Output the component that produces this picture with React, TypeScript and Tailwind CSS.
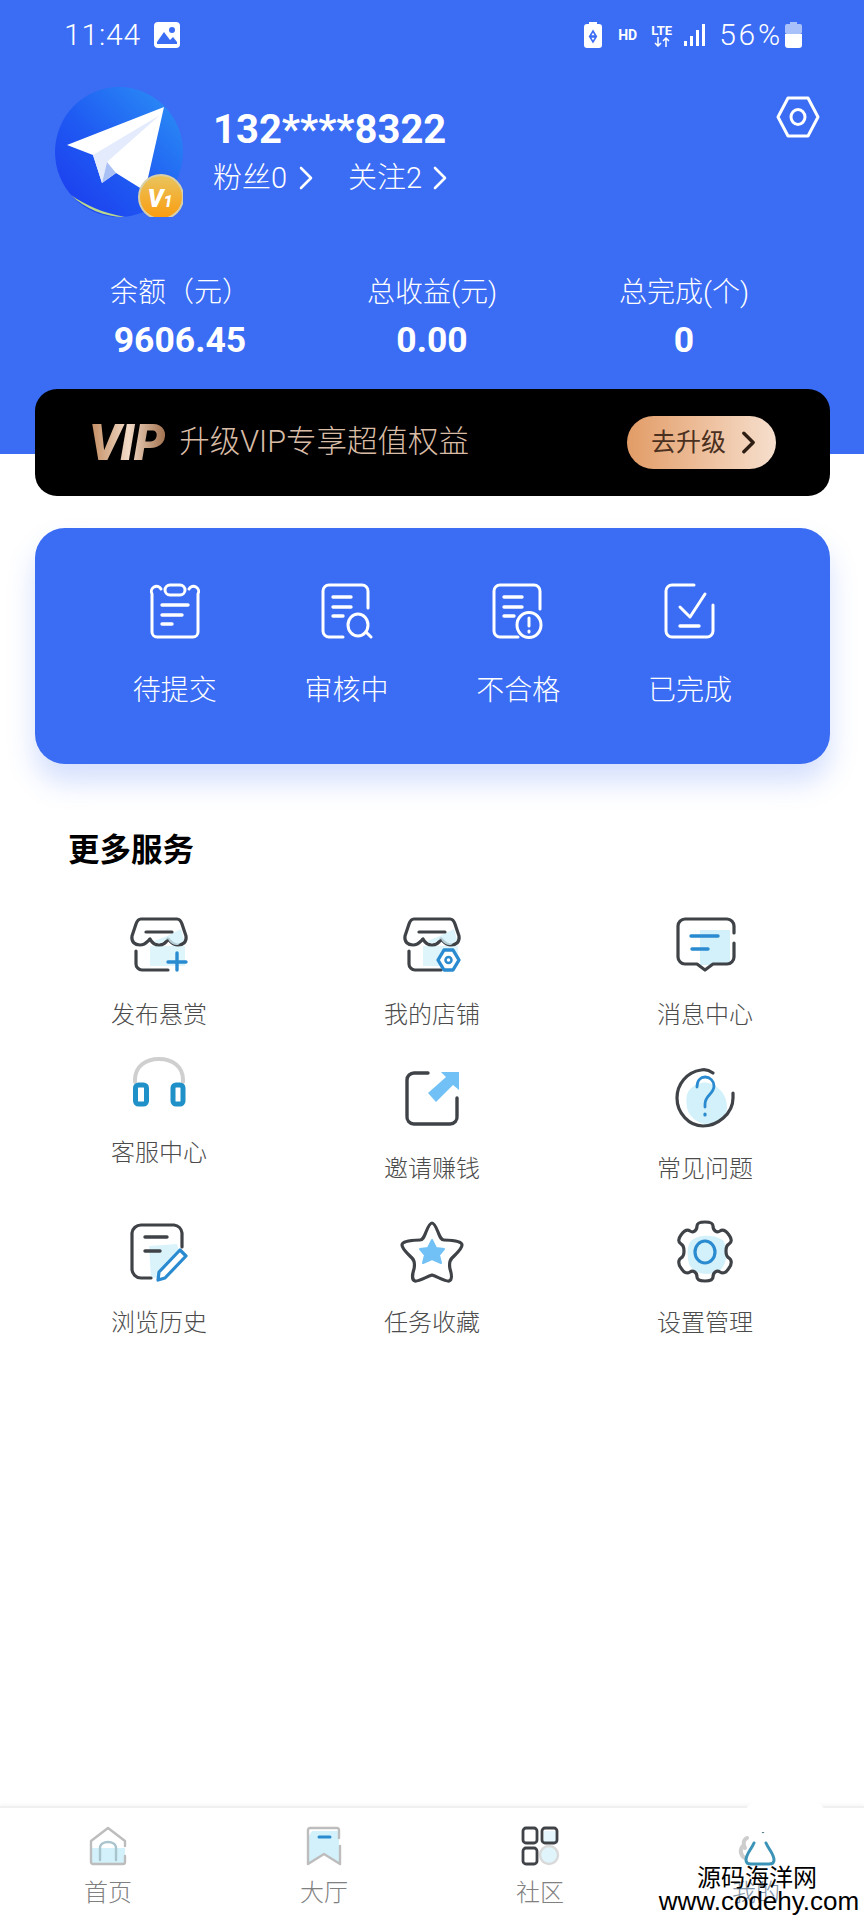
import React from "react";

const INK = "#3f4347";
const BLUE = "#2a8bd0";
const PALE = "#d3f1fa";
const SKY = "#72c1f6";

type SvgProps = { children: React.ReactNode; size?: number; box?: string; className?: string };

function Svg({ children, size = 64, box = "0 0 64 64", className }: SvgProps) {
  return (
    <svg width={size} height={size} viewBox={box} fill="none" strokeLinecap="round" strokeLinejoin="round" className={className}>
      {children}
    </svg>
  );
}

function Avatar() {
  return (
    <svg width="128" height="130" viewBox="0 0 128 130" className="shrink-0">
      <defs>
        <linearGradient id="avatarDisc" x1="1" y1="0" x2="0" y2="1">
          <stop offset="0" stopColor="#2c94f6" />
          <stop offset="0.55" stopColor="#1f5af2" />
          <stop offset="1" stopColor="#1c38ee" />
        </linearGradient>
        <linearGradient id="coin" x1="0" y1="0" x2="0" y2="1">
          <stop offset="0" stopColor="#e9c55f" />
          <stop offset="1" stopColor="#fb9b0c" />
        </linearGradient>
      </defs>
      <ellipse cx="64" cy="65" rx="64" ry="65" fill="url(#avatarDisc)" />
      <path d="M16 108 C30 122 50 130 70 130 C48 126 30 118 16 108Z" fill="#b8d78d" />
      <path d="M109 20 L12 58 L38 68 L47 96 L61 86 L90 104Z" fill="#ffffff" />
      <path d="M105 28 L38 68 L47 96 L52 75Z" fill="#e4ebfc" />
      <path d="M52 75 L47 96 L61 86Z" fill="#a9c0f5" />
      <circle cx="106" cy="110" r="22" fill="url(#coin)" stroke="#d8cfa8" strokeWidth="2" />
      <text x="105" y="120" textAnchor="middle" fontFamily="Roboto, sans-serif" fontWeight="900" fontStyle="italic" fontSize="25" fill="#fff">V<tspan fontSize="16">1</tspan></text>
    </svg>
  );
}

function Chevron({ color = "#fff", w = 14, h = 24, stroke = 2.6 }: { color?: string; w?: number; h?: number; stroke?: number }) {
  return (
    <svg width={w} height={h} viewBox="0 0 14 24" fill="none">
      <path d="M2 2 L12 12 L2 22" stroke={color} strokeWidth={stroke} strokeLinecap="round" strokeLinejoin="round" />
    </svg>
  );
}

function StatusBar() {
  return (
    <div className="flex h-[70px] items-center pl-[64px] pr-[62px] text-white">
      <span className="text-[30px] font-light leading-none tracking-[0.8px]">11:44</span>
      <svg width="26" height="26" viewBox="0 0 26 26" className="ml-[13px]">
        <rect width="26" height="26" rx="4" fill="#fff" />
        <circle cx="18" cy="8" r="3" fill="#3a6cf4" />
        <path d="M3 20 L10 10 L16 18 L19 15 L23 20 V22 H3Z" fill="#3a6cf4" />
      </svg>
      <div className="flex-1" />
      <svg width="18" height="26" viewBox="0 0 18 26">
        <rect x="5" y="0" width="8" height="3" fill="#fff" />
        <rect y="2" width="18" height="24" rx="3" fill="#fff" />
        <path d="M9 9 L12 14 H6Z M6 15 L12 15 L9 20Z" fill="none" stroke="#3a6cf4" strokeWidth="1.6" />
      </svg>
      <span className="ml-[16px] text-[14px] font-bold leading-none">HD</span>
      <div className="ml-[13px] flex w-[23px] flex-col items-center leading-none">
        <span className="text-[13px] font-bold leading-[13px]">LTE</span>
        <svg width="20" height="10" viewBox="0 0 20 10">
          <path d="M6 0 V9 M3 6 L6 9 L9 6 M14 10 V1 M11 4 L14 1 L17 4" stroke="#fff" strokeWidth="1.5" fill="none" />
        </svg>
      </div>
      <svg width="21" height="22" viewBox="0 0 21 22" className="ml-[11px]">
        <rect x="0" y="17" width="3" height="5" fill="#fff" />
        <rect x="6" y="12" width="3" height="10" fill="#fff" />
        <rect x="12" y="6" width="3" height="16" fill="#fff" />
        <rect x="18" y="0" width="3" height="22" fill="#fff" />
      </svg>
      <span className="ml-[14px] text-[30px] font-light leading-none tracking-[2.8px]">56%</span>
      <svg width="17" height="26" viewBox="0 0 17 26" className="ml-[2px]">
        <rect x="5" y="0" width="7" height="3" fill="#a9c1fa" />
        <rect y="2" width="17" height="10" rx="2" fill="#a9c1fa" />
        <path d="M0 12 H17 V23 A3 3 0 0 1 14 26 H3 A3 3 0 0 1 0 23Z" fill="#fff" />
      </svg>
    </div>
  );
}

function Profile() {
  return (
    <div className="mt-[17px] flex items-start pl-[55px] pr-[44px] text-white">
      <Avatar />
      <div className="ml-[30px] flex flex-col">
        <span className="mt-[19px] text-[40px] font-bold leading-[48px]">132****8322</span>
        <div className="mt-[4px] flex items-center text-[29px] font-light leading-[40px]">
          <span>粉丝0</span>
          <span className="ml-[12px]"><Chevron /></span>
          <span className="ml-[35px]">关注2</span>
          <span className="ml-[11px]"><Chevron /></span>
        </div>
      </div>
      <div className="flex-1" />
      <svg width="44" height="42" viewBox="0 0 44 42" fill="none" className="mt-[9px]">
        <path d="M12 2 H32 L42 21 L32 40 H12 L2 21Z" stroke="#fff" strokeWidth="3" strokeLinejoin="round" />
        <ellipse cx="22" cy="21" rx="7" ry="7.5" stroke="#fff" strokeWidth="3" />
      </svg>
    </div>
  );
}

function Stat({ label, value }: { label: string; value: string }) {
  return (
    <div className="flex flex-col items-center text-white">
      <span className="text-[28px] font-light leading-[40px]">{label}</span>
      <span className="mt-[5px] text-[35.5px] font-bold leading-[44px]">{value}</span>
    </div>
  );
}

function VipBanner() {
  return (
    <div className="relative ml-[35px] mr-[34px] -mt-[65px] flex h-[107px] items-center rounded-[22px] bg-black pl-[54px] pr-[54px]">
      <span className="bg-gradient-to-r from-[#c08a5f] via-[#f2dac6] to-[#9c6b47] bg-clip-text pr-[4px] text-[50px] font-black italic leading-none tracking-[-1px] text-transparent">VIP</span>
      <span className="ml-[11px] text-[30.5px] font-light leading-none text-[#d9bca6]">升级VIP专享超值权益</span>
      <div className="flex-1" />
      <div className="flex h-[53px] w-[149px] items-center rounded-full bg-gradient-to-r from-[#e29c66] to-[#f6dfcd] pl-[24px]">
        <span className="text-[25px] leading-none text-[#4a3020]">去升级</span>
        <span className="ml-[16px]"><Chevron color="#2e1d12" w={13} h={23} stroke={3.6} /></span>
      </div>
    </div>
  );
}

function WhiteIcon({ children }: { children: React.ReactNode }) {
  return (
    <svg width="56" height="56" viewBox="0 0 56 56" fill="none" stroke="#fff" strokeWidth="3" strokeLinecap="round" strokeLinejoin="round">
      {children}
    </svg>
  );
}

const taskIcons: Record<string, React.ReactNode> = {
  pending: (
    <WhiteIcon>
      <path d="M14 6 A5 5 0 0 0 5 11 V49 A5 5 0 0 0 10 54 H46 A5 5 0 0 0 51 49 V11 A5 5 0 0 0 42 6" />
      <rect x="18" y="2" width="20" height="10" rx="5" />
      <path d="M15 22 H41 M15 32 H35 M15 41 H25" strokeWidth="3.4" />
    </WhiteIcon>
  ),
  review: (
    <WhiteIcon>
      <path d="M49 25 V8 A6 6 0 0 0 43 2 H10 A6 6 0 0 0 4 8 V48 A6 6 0 0 0 10 54 H24" />
      <path d="M14 14 H32 M14 24 H32 M14 33 H24" strokeWidth="3.4" />
      <ellipse cx="39" cy="42" rx="10" ry="11" />
      <path d="M47 49 L52 54" />
    </WhiteIcon>
  ),
  failed: (
    <WhiteIcon>
      <path d="M50 26 V8 A6 6 0 0 0 44 2 H10 A6 6 0 0 0 4 8 V48 A6 6 0 0 0 10 54 H28" />
      <path d="M14 14 H32 M14 24 H32 M14 33 H24" strokeWidth="3.4" />
      <ellipse cx="39" cy="42" rx="12" ry="12.5" />
      <path d="M39 35 V43" />
      <path d="M39 48 V49" />
    </WhiteIcon>
  ),
  done: (
    <WhiteIcon>
      <path d="M32 2 H10 A6 6 0 0 0 4 8 V48 A6 6 0 0 0 10 54 H45 A6 6 0 0 0 51 48 V22" />
      <path d="M18 24 L28 34 L43 11" />
      <path d="M18 43 H37" strokeWidth="3.4" />
    </WhiteIcon>
  ),
};

const tasks = [
  { key: "pending", label: "待提交" },
  { key: "review", label: "审核中" },
  { key: "failed", label: "不合格" },
  { key: "done", label: "已完成" },
];

function TaskCard() {
  return (
    <div className="ml-[35px] mr-[34px] mt-[32px] grid h-[236px] grid-cols-4 rounded-[30px] bg-[#3a6cf4] px-[54px] pt-[55px] shadow-[0_18px_28px_rgba(58,108,244,0.22)]">
      {tasks.map((t) => (
        <div key={t.key} className="flex flex-col items-center">
          {taskIcons[t.key]}
          <span className="mt-[32px] text-[28px] font-light leading-[40px] text-white">{t.label}</span>
        </div>
      ))}
    </div>
  );
}

const Awning = () => (
  <>
    <path d="M23 34 H58 V54 H23Z" fill={PALE} opacity="0.75" />
    <path d="M14 7 H50 C53 7 54 9 55 12 L59 24 C60 30 56 33 51 33 C46 33 44 30 41 27 C39 31 36 33 32 33 C28 33 25 31 23 27 C20 30 18 33 13 33 C8 33 4 30 5 24 L9 12 C10 9 11 7 14 7Z" stroke={INK} strokeWidth="3.2" fill="none" />
    <path d="M27 29 C28 32 36 32 37 29 L41 27 C43 31 46 33 51 33 L57 28 L54 17 L40 24Z" fill={PALE} opacity="0.8" />
    <path d="M19 20 H45" stroke={INK} strokeWidth="3.2" />
    <path d="M9 39 V52 A6 6 0 0 0 15 58 H41" stroke={INK} strokeWidth="3.2" />
  </>
);

const serviceIcons: Record<string, React.ReactNode> = {
  publish: (
    <Svg>
      <Awning />
      <path d="M50 41 V58 M41 50 H59" stroke={BLUE} strokeWidth="3.4" />
    </Svg>
  ),
  shop: (
    <Svg>
      <Awning />
      <path d="M44 38 H53 L59 48 L53 58 H44 L38 48Z" fill="#fff" stroke={BLUE} strokeWidth="3.4" />
      <circle cx="48.5" cy="48" r="3" stroke={BLUE} strokeWidth="2.5" />
    </Svg>
  ),
  message: (
    <Svg>
      <path d="M27 18 H57 V53 H27Z" fill={PALE} />
      <path d="M61 21 V14 A7 7 0 0 0 54 7 H12 A7 7 0 0 0 5 14 V45 A7 7 0 0 0 12 52 H24 L32 58 L40 52 H54 A7 7 0 0 0 61 45 V31" stroke={INK} strokeWidth="3.2" />
      <path d="M18 24 H45 M19 37 H35" stroke={BLUE} strokeWidth="3.4" />
    </Svg>
  ),
  service: (
    <Svg>
      <path d="M8 32 V30 C8 16 19 9 32 9 C45 9 56 16 56 30 V32" stroke="#cfcfcf" strokeWidth="4" />
      <rect x="8.5" y="35" width="11" height="19" rx="3" stroke="#2090c8" strokeWidth="5" />
      <rect x="46" y="35" width="10" height="19" rx="3" stroke="#2090c8" strokeWidth="5" />
    </Svg>
  ),
  invite: (
    <Svg>
      <path d="M28 7 H14 A7 7 0 0 0 7 14 V50 A7 7 0 0 0 14 58 H50 A7 7 0 0 0 57 50 V32" stroke={INK} strokeWidth="3.4" />
      <path d="M41 6 H59 V24 L53 19 L36 36 L28 27 L46 11Z" fill={SKY} />
    </Svg>
  ),
  faq: (
    <Svg>
      <path d="M15 26 C20 18 30 14 38 18 C48 22 54 30 54 42 C54 52 44 58 34 58 C24 58 16 50 14 42 C13 36 13 30 15 26Z" fill={PALE} />
      <path d="M40 7 C36 4 32 3 28 4 C14 6 4 18 4 32 C4 47 16 60 30 60 C44 60 60 48 60 32 V27" stroke={INK} strokeWidth="3.2" />
      <path d="M24 21 C24 14 28 11 32 11 C37 11 41 15 41 20 C41 28 32 29 32 38 V41" stroke={BLUE} strokeWidth="2.8" />
      <path d="M32 48 V49" stroke={BLUE} strokeWidth="3.2" />
    </Svg>
  ),
  history: (
    <Svg>
      <path d="M22 26 L50 24 L55 40 C50 52 36 58 24 58Z" fill={PALE} opacity="0.85" />
      <path d="M24 58 H14 A9 9 0 0 1 5 49 V13 A9 9 0 0 1 14 5 H47 A9 9 0 0 1 55 13 V27" stroke={INK} strokeWidth="3.2" />
      <path d="M18 17 H40 M18 31 H33" stroke={INK} strokeWidth="3.4" />
      <path d="M53 30 L59 36 L38 58 L31 60 L32 52Z" stroke={BLUE} strokeWidth="3.2" fill="#fff" />
    </Svg>
  ),
  favorite: (
    <Svg>
      <path d="M32 3 C34 3 36 7 38 12 C40 17 41 20 44 20 C50 20 62 21 62 25 C62 29 56 34 52 38 C49 41 49 44 50 49 C52 55 52 60 49 61 C46 62 38 57 32 55 C26 57 18 62 15 61 C12 60 12 55 14 49 C15 44 15 41 12 38 C8 34 2 29 2 25 C2 21 14 20 20 20 C23 20 24 17 26 12 C28 7 30 3 32 3Z" stroke={INK} strokeWidth="3.2" />
      <path d="M32 20 L36 28 L44 29 L39 35 L41 43 L32 39 L23 43 L25 35 L20 29 L28 28Z" fill={SKY} stroke={SKY} strokeWidth="2" />
    </Svg>
  ),
  settings: (
    <Svg>
      <path d="M17 22 C24 14 40 14 50 20 C56 30 54 48 44 52 C34 56 20 54 16 44 C14 36 14 28 17 22Z" fill={PALE} />
      <path d="M24 6 C24 3 27 2 32 2 C37 2 40 3 40 6 C40 11 44 13 47 11 C50 9 53 11 56 15 C59 19 59 22 56 24 C52 26 52 36 56 38 C59 40 59 44 56 48 C53 53 50 54 47 52 C44 50 40 52 40 57 C40 60 37 61 32 61 C27 61 24 60 24 57 C24 52 20 50 17 52 C14 54 11 53 8 48 C5 44 5 40 8 38 C12 36 12 26 8 24 C5 22 5 19 8 15 C11 11 14 9 17 11 C20 13 24 11 24 6Z" stroke={INK} strokeWidth="3.2" />
      <ellipse cx="32" cy="32" rx="10" ry="11" stroke={BLUE} strokeWidth="3.2" />
    </Svg>
  ),
};

const services = [
  { key: "publish", label: "发布悬赏" },
  { key: "shop", label: "我的店铺" },
  { key: "message", label: "消息中心" },
  { key: "service", label: "客服中心" },
  { key: "invite", label: "邀请赚钱" },
  { key: "faq", label: "常见问题" },
  { key: "history", label: "浏览历史" },
  { key: "favorite", label: "任务收藏" },
  { key: "settings", label: "设置管理" },
];

function Services() {
  return (
    <div>
      <h2 className="ml-[68px] mt-[67px] text-[31.5px] font-bold leading-[40px] text-black">更多服务</h2>
      <div className="mt-[41px] grid grid-cols-3 gap-y-[34px] px-[22.5px]">
        {services.map((s) => (
          <div key={s.key} className={s.key === "service" ? "-mt-[16px] flex h-[120px] flex-col items-center self-start" : "flex h-[120px] flex-col items-center"}>
            {serviceIcons[s.key]}
            <span className="mt-[22px] text-[24px] font-light leading-[34px] text-[#4c4c4c]">{s.label}</span>
          </div>
        ))}
      </div>
    </div>
  );
}

const navIcons: React.ReactNode[] = [
  <svg key="home" width="40" height="40" viewBox="0 0 40 40" fill="none" strokeLinejoin="round" strokeLinecap="round">
    <path d="M3 22 H37 V36 A2 2 0 0 1 35 38 H5 A2 2 0 0 1 3 36Z" fill={PALE} />
    <path d="M3 36 V15 L20 2 L37 15 V20 M37 30 V36 A2 2 0 0 1 35 38 H5 A2 2 0 0 1 3 36" stroke="#bdbdbd" strokeWidth="2.4" />
    <path d="M12 34 V22 C12 14 28 14 28 22 V34" stroke="#a9c4cc" strokeWidth="2.4" />
  </svg>,
  <svg key="hall" width="40" height="40" viewBox="0 0 40 40" fill="none" strokeLinejoin="round" strokeLinecap="round">
    <path d="M8 5 H35 V38 L20 27 L5 38 V10Z" fill={PALE} />
    <path d="M35 12 V4 A2 2 0 0 0 33 2 H6 A2 2 0 0 0 4 4 V38 L20 28 L36 38 V20" stroke="#bdbdbd" strokeWidth="2.4" />
    <path d="M15 11 H26" stroke={BLUE} strokeWidth="3" />
  </svg>,
  <svg key="community" width="40" height="40" viewBox="0 0 40 40" fill="none">
    <path d="M24 5 H38 V18 H24Z" fill={PALE} opacity="0.6" />
    <circle cx="29" cy="29" r="9" fill={PALE} opacity="0.7" stroke="#c9c9c9" strokeWidth="2.4" />
    <rect x="3" y="2" width="14" height="15" rx="3" stroke={INK} strokeWidth="2.8" />
    <rect x="22" y="2" width="15" height="15" rx="3" stroke={INK} strokeWidth="2.8" />
    <rect x="3" y="22" width="14" height="16" rx="3" stroke={INK} strokeWidth="2.8" />
  </svg>,
  <svg key="mine" width="44" height="40" viewBox="0 0 44 40" fill="none" strokeLinecap="round" className="translate-x-[3px]">
    <path d="M6 20 C2 24 4 30 8 32 M10 12 C6 14 6 18 8 22" stroke="#cdcdcd" strokeWidth="4" />
    <path d="M26 2 V6" stroke="#5d7f8c" strokeWidth="2.5" />
    <path d="M17 17 C14 24 9 28 9 34 C9 37 11 38 14 38 H32 C35 38 37 37 37 34 C37 28 32 24 29 17" stroke="#3b93b8" strokeWidth="3" />
  </svg>,
];

const navLabels = ["首页", "大厅", "社区", "我的"];

function BottomNav() {
  return (
    <div className="grid h-[114px] grid-cols-4 border-t-[2px] border-[#f0f0f0] bg-white shadow-[0_-2px_3px_rgba(0,0,0,0.03)]">
      {navLabels.map((label, i) => (
        <div key={label} className="flex flex-col items-center pt-[18px]">
          <div className="flex h-[40px] items-center justify-center">{navIcons[i]}</div>
          <span className={i === 3 ? "mt-[12px] text-[24px] font-light leading-[30px] text-[#7f93a8]" : "mt-[12px] text-[24px] font-light leading-[30px] text-[#808080]"}>{label}</span>
        </div>
      ))}
    </div>
  );
}

export default function App() {
  return (
    <div className="relative flex h-[1920px] w-[864px] flex-col overflow-hidden bg-white font-[family-name:Roboto,'Noto_Sans_CJK_SC',sans-serif]">
      <div className="h-[454px] bg-[#3a6cf4]">
        <StatusBar />
        <Profile />
        <div className="mt-[56px] grid grid-cols-3 px-[54px]">
          <Stat label="余额（元）" value="9606.45" />
          <Stat label="总收益(元)" value="0.00" />
          <Stat label="总完成(个)" value="0" />
        </div>
      </div>
      <VipBanner />
      <TaskCard />
      <Services />
      <div className="flex-1" />
      <BottomNav />
      {/* Soft white patch and site mark laid over the last tab */}
      <div className="absolute left-[744px] top-[1802px] h-[30px] w-[82px] rounded-[14px] bg-white" />
      <div className="absolute left-[654px] top-[1864px] flex w-[210px] flex-col items-center text-black">
        <span className="-translate-x-[2px] text-[24px] leading-[28px]">源码海洋网</span>
        <span className="-mt-[2px] font-[family-name:'Liberation_Sans',sans-serif] text-[26px] leading-[22px]">www.codehy.com</span>
      </div>
    </div>
  );
}
